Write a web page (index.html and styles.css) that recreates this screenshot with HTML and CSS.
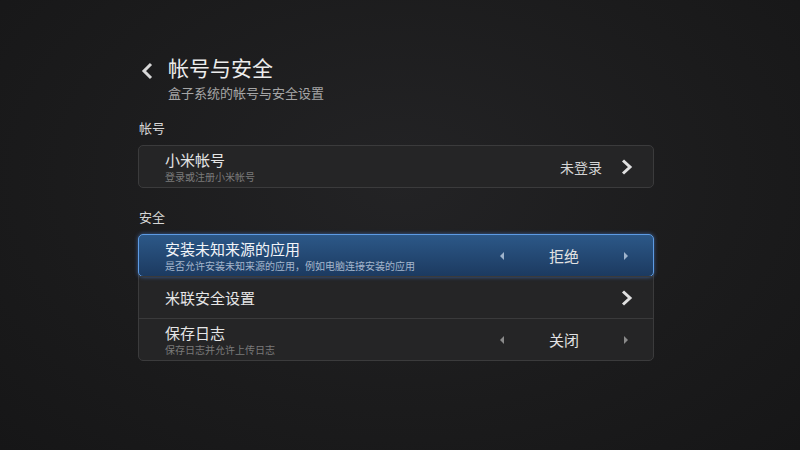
FILE: index.html
```html
<!DOCTYPE html>
<html lang="zh-CN">
<head>
    <meta charset="UTF-8">
    <title>帐号与安全</title>
    <link rel="stylesheet" href="styles.css">
</head>
<body>
    <div class="page">
        <header class="head">
            <svg class="back" width="14" height="18" viewBox="0 0 14 18"><path d="M11 2 L4 9 L11 16" fill="none" stroke="#d8d8d8" stroke-width="3"/></svg>
            <div class="head-text">
                <div class="title">帐号与安全</div>
                <div class="subtitle">盒子系统的帐号与安全设置</div>
            </div>
        </header>

        <div class="section">帐号</div>
        <div class="group">
            <div class="row">
                <div class="row-text">
                    <div class="row-title">小米帐号</div>
                    <div class="row-sub">登录或注册小米帐号</div>
                </div>
                <span class="value">未登录</span>
                <svg class="chev" width="12" height="16" viewBox="0 0 12 16"><path d="M2 1.5 L9 8 L2 14.5" fill="none" stroke="#e0e0e0" stroke-width="3"/></svg>
            </div>
        </div>

        <div class="section">安全</div>
        <div class="group">
            <div class="row focus">
                <div class="row-text">
                    <div class="row-title">安装未知来源的应用</div>
                    <div class="row-sub">是否允许安装未知来源的应用，例如电脑连接安装的应用</div>
                </div>
                <div class="picker">
                    <span class="tri tri-l"></span>
                    <span class="pick-val">拒绝</span>
                    <span class="tri tri-r"></span>
                </div>
            </div>
            <div class="row">
                <div class="row-text">
                    <div class="row-title">米联安全设置</div>
                </div>
                <svg class="chev" width="12" height="16" viewBox="0 0 12 16"><path d="M2 1.5 L9 8 L2 14.5" fill="none" stroke="#e0e0e0" stroke-width="3"/></svg>
            </div>
            <div class="row">
                <div class="row-text">
                    <div class="row-title">保存日志</div>
                    <div class="row-sub">保存日志并允许上传日志</div>
                </div>
                <div class="picker">
                    <span class="tri tri-l"></span>
                    <span class="pick-val">关闭</span>
                    <span class="tri tri-r"></span>
                </div>
            </div>
        </div>
    </div>
</body>
</html>
```

FILE: styles.css
```css
html, body {
    margin: 0;
    height: 100%;
}
body {
    background: radial-gradient(ellipse at 50% 40%, #232325 0%, #1b1b1c 60%, #161617 100%);
    font-family: "Noto Sans CJK SC", "Noto Sans", sans-serif;
    color: #e4e4e4;
    overflow: hidden;
}
.page {
    width: 516px;
    padding: 54px 0 0 138px;
}
.head {
    display: flex;
    align-items: flex-start;
}
.back {
    margin: 8px 0 0 2px;
}
.head-text {
    margin-left: 14px;
}
.title {
    font-size: 21px;
    line-height: 26px;
    color: #ececec;
}
.subtitle {
    font-size: 13px;
    line-height: 16px;
    margin-top: 5px;
    color: #a6a6a6;
}
.section {
    font-size: 13px;
    line-height: 16px;
    color: #d6d6d6;
    margin: 19px 0 9px 1px;
}
.group + .section {
    margin-top: 21px;
}
.group {
    background: #252526;
    border: 1px solid #3b3b3c;
    border-radius: 5px;
}
.row {
    display: flex;
    align-items: center;
    height: 41px;
    padding-left: 26px;
    border-top: 1px solid #3a3a3b;
}
.row:first-child {
    border-top: none;
}
.row.focus {
    margin: -1px;
    border: 1px solid #5d9be4;
    border-radius: 5px;
    background: linear-gradient(#2c5888, #1c3a60);
    box-shadow: 0 0 4px rgba(80, 140, 230, 0.6);
}
.row-text {
    flex: 1;
}
.row-title {
    font-size: 15px;
    line-height: 18px;
    color: #e6e6e6;
}
.focus .row-title {
    color: #f2f4f8;
}
.row-sub {
    font-size: 10px;
    line-height: 12px;
    margin-top: 2px;
    color: #7a7a7a;
}
.focus .row-sub {
    color: #a4b6cc;
}
.value {
    font-size: 14px;
    color: #d4d4d4;
    margin-right: 19px;
}
.chev {
    margin-right: 20px;
}
.picker {
    display: flex;
    align-items: center;
    justify-content: space-between;
    width: 128px;
    margin-right: 25px;
}
.pick-val {
    font-size: 15px;
    color: #e2e2e2;
}
.tri {
    width: 0;
    height: 0;
    border-top: 4px solid transparent;
    border-bottom: 4px solid transparent;
}
.tri-l {
    border-right: 4px solid #8a8a8a;
}
.tri-r {
    border-left: 4px solid #8a8a8a;
}
.focus .tri-l {
    border-right-color: #9fb4cc;
}
.focus .tri-r {
    border-left-color: #9fb4cc;
}
```
